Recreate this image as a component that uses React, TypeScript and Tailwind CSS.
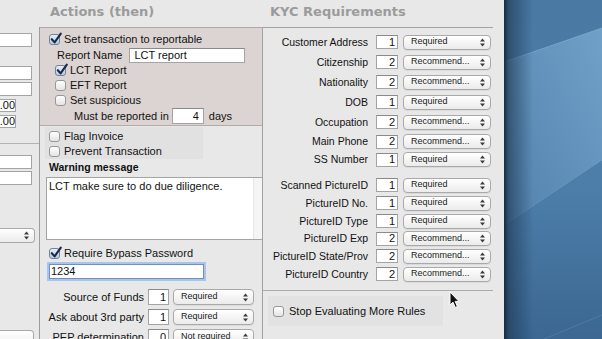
import React from "react";

// small Aqua-ish form controls
const Checkbox = ({ on = false }: { on?: boolean }) => (
  <span
    className={`relative inline-block h-[11px] w-[11px] shrink-0 rounded-[3px] border ${
      on
        ? "border-[#6f83a0] bg-gradient-to-b from-[#e6eef8] to-[#b9cbe0]"
        : "border-[#979797] bg-gradient-to-b from-white to-[#e4e4e4]"
    }`}
  >
    {on && (
      <svg className="absolute -top-[3px] left-[0px] h-[13px] w-[12px] overflow-visible" viewBox="0 0 12 13">
        <path d="M1.8 7.2 L4.6 10.4 L10.8 1.6" fill="none" stroke="#1c2946" strokeWidth="2.1" strokeLinecap="round" strokeLinejoin="round" />
      </svg>
    )}
  </span>
);

const Arrows = () => (
  <svg className="h-[9px] w-[5px] shrink-0" viewBox="0 0 5 9">
    <path d="M0 3.6 L2.5 0.4 L5 3.6 Z" fill="#3a3a3a" />
    <path d="M0 5.4 L2.5 8.6 L5 5.4 Z" fill="#3a3a3a" />
  </svg>
);

const Select = ({ value, className = "" }: { value: string; className?: string }) => (
  <div
    className={`flex shrink-0 items-center justify-between rounded-[4px] border border-[#a9a9a9] bg-gradient-to-b from-white to-[#ebebeb] pl-[7px] pr-[5px] text-[9px] text-[#1a1a1a] shadow-[0_1px_0_rgba(0,0,0,0.06)] ${className}`}
  >
    <span className="truncate">{value}</span>
    <Arrows />
  </div>
);

const NumBox = ({ value, className = "" }: { value: string; className?: string }) => (
  <div
    className={`flex shrink-0 items-center justify-end border border-[#a4a4a4] border-t-[#8a8a8a] bg-white pr-[2px] text-[11px] leading-none ${className}`}
  >
    {value}
  </div>
);

const kycTop = [
  { label: "Customer Address", n: "1", v: "Required", h: "h-[20px]" },
  { label: "Citizenship", n: "2", v: "Recommend...", h: "h-[20px]" },
  { label: "Nationality", n: "2", v: "Recommend...", h: "h-[20px]" },
  { label: "DOB", n: "1", v: "Required", h: "h-[20px]" },
  { label: "Occupation", n: "2", v: "Recommend...", h: "h-[20px]" },
  { label: "Main Phone", n: "2", v: "Recommend...", h: "h-[19px]" },
  { label: "SS Number", n: "1", v: "Required", h: "h-[17px]" },
];

const kycPicture = [
  { label: "Scanned PictureID", n: "1", v: "Required", h: "h-[18px]" },
  { label: "PictureID No.", n: "1", v: "Required", h: "h-[18px]" },
  { label: "PictureID Type", n: "1", v: "Required", h: "h-[18px]" },
  { label: "PictureID Exp", n: "2", v: "Recommend...", h: "h-[17px]" },
  { label: "PictureID State/Prov", n: "2", v: "Recommend...", h: "h-[18px]" },
  { label: "PictureID Country", n: "2", v: "Recommend...", h: "h-[18px]" },
];

const KycRow = ({ label, n, v, h }: { label: string; n: string; v: string; h: string }) => (
  <div className={`flex items-center ${h}`}>
    <div className="w-[105px] shrink-0 text-right text-[10.5px] leading-none">{label}</div>
    <NumBox value={n} className="ml-[8px] h-[14px] w-[22px]" />
    <Select value={v} className="ml-[5px] h-[15px] w-[88px]" />
  </div>
);

const ActionRow = ({ label, n, v }: { label: string; n: string; v: string }) => (
  <div className="flex h-[16px] items-center">
    <div className="w-[104px] shrink-0 text-right text-[11px] leading-none">{label}</div>
    <NumBox value={n} className="ml-[4px] h-[16px] w-[21px]" />
    <Select value={v} className="ml-[4px] h-[16px] w-[81px]" />
  </div>
);

const Wallpaper = () => (
  <svg className="h-full w-full" viewBox="0 0 98 339" preserveAspectRatio="none">
    <defs>
      <linearGradient id="wp" x1="0" y1="0" x2="0" y2="1">
        <stop offset="0" stopColor="#4a79a3" />
        <stop offset="0.55" stopColor="#4d7eaa" />
        <stop offset="1" stopColor="#3b6792" />
      </linearGradient>
      <linearGradient id="band" x1="1" y1="0" x2="0" y2="1">
        <stop offset="0" stopColor="#7aaad0" />
        <stop offset="1" stopColor="#5383ae" />
      </linearGradient>
      <linearGradient id="edge" x1="0" y1="0" x2="1" y2="0">
        <stop offset="0" stopColor="#14263a" stopOpacity="0.95" />
        <stop offset="0.05" stopColor="#1c3550" stopOpacity="0.6" />
        <stop offset="0.3" stopColor="#1c3550" stopOpacity="0" />
      </linearGradient>
    </defs>
    <rect width="98" height="339" fill="url(#wp)" />
    <polygon points="0,62 98,28 98,160 0,225" fill="url(#band)" opacity="0.8" />
    <line x1="0" y1="62" x2="98" y2="28" stroke="#93bbdc" strokeWidth="0.8" opacity="0.6" />
    <line x1="0" y1="225" x2="98" y2="160" stroke="#8fb8da" strokeWidth="0.6" opacity="0.45" />
    <line x1="40" y1="339" x2="98" y2="315" stroke="#7fa8cc" strokeWidth="0.6" opacity="0.45" />
    <rect width="98" height="339" fill="url(#edge)" />
  </svg>
);

export default function App() {
  return (
    <div className="relative flex h-[339px] w-[602px] overflow-hidden bg-[#e8e8e8] font-['Liberation_Sans',Arial,sans-serif] text-[11px] text-[#111]">
      {/* window */}
      <div className="flex w-[504px] shrink-0">
        {/* left column (conditions, cut off) */}
        <div className="flex w-[40px] shrink-0 flex-col">
          <div className="h-[27px] shrink-0" />
          <div className="flex-1 overflow-hidden border-r border-[#9c9c9c]">
            <div className="mt-[6px] h-[14px] w-[32px] border border-l-0 border-[#a4a4a4] bg-white" />
            <div className="mt-[19px] h-[14px] w-[32px] border border-l-0 border-[#a4a4a4] bg-white" />
            <div className="mt-[2px] h-[14px] w-[32px] border border-l-0 border-[#a4a4a4] bg-white" />
            <div className="mt-[3px] flex h-[13px] w-[16px] items-center justify-end border border-l-0 border-[#a4a4a4] bg-white leading-none">
              .00
            </div>
            <div className="mt-[3px] flex h-[13px] w-[16px] items-center justify-end border border-l-0 border-[#a4a4a4] bg-white leading-none">
              .00
            </div>
            <div className="mt-[15px] h-px w-full bg-[#b3b3b3]" />
            <div className="mt-[11px] h-[14px] w-[32px] border border-l-0 border-[#a4a4a4] bg-white" />
            <div className="mt-[2px] h-[14px] w-[32px] border border-l-0 border-[#a4a4a4] bg-white" />
            <div className="mt-[43px] flex h-[15px] w-[35px] items-center justify-end rounded-r-[4px] border border-l-0 border-[#a9a9a9] bg-gradient-to-b from-white to-[#ebebeb] pr-[5px]">
              <Arrows />
            </div>
            <div className="mt-[87px] h-[20px] w-[34px] rounded-r-[4px] border border-l-0 border-[#a9a9a9] bg-gradient-to-b from-white to-[#ebebeb]" />
          </div>
        </div>

        {/* middle column: Actions (then) */}
        <div className="flex w-[222px] shrink-0 flex-col">
          <div className="h-[27px] shrink-0 pl-[10px] pt-[4px] font-['DejaVu_Sans',sans-serif] text-[13px] font-bold leading-[16px] text-[#9b9b9b]">
            Actions (then)
          </div>
          <div className="flex-1 overflow-hidden border-t border-[#a9a9a9]">
            <div className="border-b border-[#b3abaa] bg-[#dcd4d2] pb-[1px] pt-[5px]">
              <div className="flex h-[13px] items-center gap-[4px] pl-[9px]">
                <Checkbox on />
                <span className="leading-none">Set transaction to reportable</span>
              </div>
              <div className="mt-[2px] flex h-[15px] items-center pl-[17px]">
                <span className="leading-none">Report Name</span>
                <div className="ml-[7px] flex h-[15px] w-[116px] items-center border border-[#a4a4a4] border-t-[#8a8a8a] bg-white pl-[4px] leading-none">
                  LCT report
                </div>
              </div>
              <div className="flex h-[15px] items-center gap-[4px] pl-[15px]">
                <Checkbox on />
                <span className="leading-none">LCT Report</span>
              </div>
              <div className="flex h-[15px] items-center gap-[4px] pl-[15px]">
                <Checkbox />
                <span className="leading-none">EFT Report</span>
              </div>
              <div className="flex h-[14px] items-center gap-[4px] pl-[15px]">
                <Checkbox />
                <span className="leading-none">Set suspicious</span>
              </div>
              <div className="mt-[1px] flex h-[16px] items-center pl-[34px]">
                <span className="leading-none">Must be reported in</span>
                <NumBox value="4" className="ml-[3px] h-[16px] w-[32px] pr-[4px]" />
                <span className="ml-[5px] leading-none">days</span>
              </div>
            </div>

            <div className="ml-[5px] mt-[1px] w-[158px] bg-[#e1e1e1] pt-[2px]">
              <div className="flex h-[15px] items-center gap-[4px] pl-[4px]">
                <Checkbox />
                <span className="leading-none">Flag Invoice</span>
              </div>
              <div className="flex h-[15px] items-center gap-[4px] pl-[4px]">
                <Checkbox />
                <span className="leading-none">Prevent Transaction</span>
              </div>
            </div>

            <div className="mt-[1px] flex h-[14px] items-center pl-[9px] text-[10.5px] font-bold leading-none">
              Warning message
            </div>
            <div className="ml-[6px] mt-[3px] flex h-[63px] border border-r-0 border-[#a4a4a4] bg-white">
              <div className="flex-1 pl-[2px] pt-[3px] leading-none">LCT make sure to do due diligence.</div>
              <div className="w-[9px] border-l border-[#e6e6e6] bg-[#f5f5f5]" />
            </div>

            <div className="mt-[6px] flex h-[14px] items-center gap-[4px] pl-[9px]">
              <Checkbox on />
              <span className="leading-none">Require Bypass Password</span>
            </div>
            <div className="ml-[9px] mt-[4px] flex h-[15px] w-[155px] items-center border border-[#6f8fbf] bg-white pl-[1px] leading-none shadow-[0_0_0_2px_#a8c6ec]">
              1234
            </div>

            <div className="mt-[10px] flex flex-col gap-[4px]">
              <ActionRow label="Source of Funds" n="1" v="Required" />
              <ActionRow label="Ask about 3rd party" n="1" v="Required" />
              <ActionRow label="PEP determination" n="0" v="Not required" />
            </div>
          </div>
        </div>

        {/* right column: KYC Requirements */}
        <div className="flex w-[231px] shrink-0 flex-col">
          <div className="h-[27px] shrink-0 pl-[8px] pt-[4px] font-['DejaVu_Sans',sans-serif] text-[13px] font-bold leading-[16px] text-[#9b9b9b]">
            KYC Requirements
          </div>
          <div className="flex-1 border-l border-t border-[#a2a2a2] pt-[4px]">
            {kycTop.map((r) => (
              <KycRow key={r.label} {...r} />
            ))}
            <div className="mt-[8px]">
              {kycPicture.map((r) => (
                <KycRow key={r.label} {...r} />
              ))}
            </div>
            <div className="mt-[7px] h-px w-full bg-[#ababab]" />
            <div className="ml-[5px] mt-[5px] flex h-[30px] w-[175px] items-center gap-[5px] bg-[#e2e2e2] pl-[5px]">
              <Checkbox />
              <span className="leading-none">Stop Evaluating More Rules</span>
            </div>
          </div>
        </div>
        <div className="flex-1" />
      </div>

      {/* desktop behind the window */}
      <div className="flex-1">
        <Wallpaper />
      </div>

      {/* mouse pointer */}
      <svg className="absolute left-[449px] top-[291px] h-[18px] w-[12px]" viewBox="0 0 12 18">
        <path d="M1 1 L1 14 L4 11.2 L6.3 16.4 L8.4 15.5 L6.2 10.4 L10 10.4 Z" fill="#111" stroke="#fff" strokeWidth="1" strokeLinejoin="round" />
      </svg>
    </div>
  );
}
